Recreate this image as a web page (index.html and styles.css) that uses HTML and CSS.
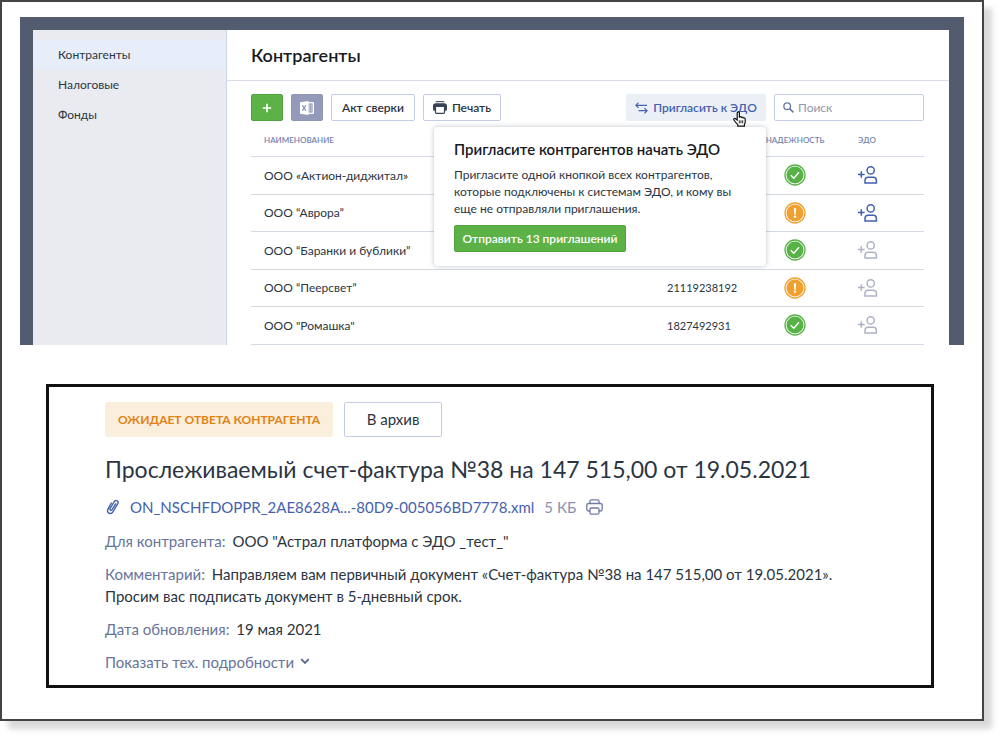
FILE: index.html
```html
<!DOCTYPE html>
<html lang="ru">
<head>
<meta charset="utf-8">
<meta name="viewport" content="width=device-width, initial-scale=1">
<title>Контрагенты</title>
<link rel="stylesheet" href="styles.css">
</head>
<body>
<svg class="sprite" aria-hidden="true">
  <symbol id="ok" viewBox="0 0 22 22">
    <circle cx="11" cy="11" r="10" fill="#fff" stroke="#58b248" stroke-width="1.3"/>
    <circle cx="11" cy="11" r="8.5" fill="#58b248"/>
    <path d="M6.8 11.2l3 3 5.2-6" fill="none" stroke="#fff" stroke-width="1.3"/>
  </symbol>
  <symbol id="warn" viewBox="0 0 22 22">
    <circle cx="11" cy="11" r="10" fill="#fff" stroke="#efa02f" stroke-width="1.3"/>
    <circle cx="11" cy="11" r="8.5" fill="#efa02f"/>
    <path d="M9.8 6.3h2.4l-.5 6.4h-1.4z" fill="#fff"/>
    <circle cx="11" cy="14.8" r="1.2" fill="#fff"/>
  </symbol>
  <symbol id="invite" viewBox="0 0 20 18">
    <g fill="none" stroke="currentColor" stroke-width="1.5">
      <circle cx="12.7" cy="4.4" r="3.6"/>
      <path d="M7 17v-2.600c0-1.900 1.300-3.200 3.200-3.200h5c1.900 0 3.200 1.300 3.200 3.200V17z"/>
      <path d="M0 8.500h6.600M3.300 5.200v6.600"/>
    </g>
  </symbol>
</svg>
<div class="sheet">
  <section class="app">
    <nav class="sidebar" aria-label="Разделы">
      <a class="sidebar-link is-active" href="#partners">Контрагенты</a>
      <a class="sidebar-link" href="#tax">Налоговые</a>
      <a class="sidebar-link" href="#funds">Фонды</a>
    </nav>
    <main class="main" id="partners">
      <header class="main-header"><h1 class="main-title">Контрагенты</h1></header>
      <div class="content">
        <div class="toolbar">
          <button class="btn btn-green btn-icon" type="button" aria-label="Добавить">
            <svg width="10" height="10" viewBox="0 0 10 10"><path d="M5 .8v8.400M.8 5h8.400" stroke="#fff" stroke-width="1.6"/></svg>
          </button>
          <button class="btn btn-excel btn-icon" type="button" aria-label="Excel">
            <svg width="16" height="14" viewBox="0 0 16 14">
              <path d="M9 1.500h5.500v11H9" fill="#c9cddd" stroke="#fff"/>
              <path d="M9.500 3.700h4M9.500 5.900h4M9.500 8.100h4M9.500 10.300h4M11.500 2v10" stroke="#949bb9" stroke-width=".7"/>
              <path d="M1 1.300L9.500 0v14L1 12.700z" fill="#fff"/>
              <path d="M3.300 4.300l3.600 5.400M6.900 4.300L3.300 9.700" stroke="#7e86a9" stroke-width="1.100"/>
            </svg>
          </button>
          <button class="btn" type="button">Акт сверки</button>
          <button class="btn btn-print" type="button">
            <svg width="14" height="13" viewBox="0 0 14 13">
              <path d="M2.800.7h8.400" stroke="#3a4459" stroke-width="1.100"/>
              <path d="M2.500 2.200h9c1.500 0 2.500 1 2.500 2.300v3.700c0 .9-.6 1.500-1.500 1.500H12V6H2v3.700h-.5C.6 9.700 0 9.100 0 8.200V4.500c0-1.300 1-2.300 2.500-2.300z" fill="#3a4459"/>
              <path d="M2.500 5.500h9v5.700c0 .7-.4 1.100-1.100 1.100H3.600c-.7 0-1.100-.4-1.100-1.100z" fill="#fff" stroke="#3a4459" stroke-width="1.200"/>
            </svg>
            Печать
          </button>
          <div class="invite">
            <button class="btn btn-invite" type="button" aria-expanded="true">
              <svg width="13" height="12" viewBox="0 0 13 12"><path d="M3.500.7L.9 3.300l2.600 2.600M.9 3.300H12M9.500 6.100l2.600 2.600-2.600 2.600M12.100 8.700H3.500" fill="none" stroke="currentColor" stroke-width="1.200"/></svg>
              Пригласить к ЭДО
            </button>
            <svg class="cursor" width="13" height="16" viewBox="0 0 13 16"><path d="M4.200 9V2c0-1.600 2.200-1.600 2.200 0v4c.8-.6 1.800-.4 2 .4.800-.5 1.700-.2 1.900.6 1-.4 1.900.1 1.900 1.200v3c0 1-.8 1.700-.8 2.600v1.300H4.800v-1.400C3.300 12.200 2.300 11 .9 9c-.7-1.100.6-2 1.600-1.300z" fill="#fff" stroke="#111" stroke-width="1.200"/><path d="M6.300 9.300v3M8 9.300v3M9.700 9.300v3" stroke="#111" stroke-width=".9"/></svg>
            <div class="popover">
              <h2 class="popover-title">Пригласите контрагентов начать ЭДО</h2>
              <p class="popover-text">Пригласите одной кнопкой всех контрагентов, которые подключены к системам ЭДО, и кому вы еще не отправляли приглашения.</p>
              <button class="btn btn-green btn-send" type="button">Отправить 13 приглашений</button>
            </div>
          </div>
          <label class="search">
            <svg width="11" height="11" viewBox="0 0 11 11"><circle cx="4.200" cy="4.200" r="3.300" fill="none" stroke="#6e7baa" stroke-width="1.400"/><path d="M6.600 6.600l3.800 3.800" stroke="#6e7baa" stroke-width="1.600"/></svg>
            <input class="search-input" type="search" placeholder="Поиск" aria-label="Поиск">
          </label>
        </div>
        <table class="table">
          <colgroup><col><col class="col-inn"><col class="col-trust"><col class="col-edo"></colgroup>
          <thead>
            <tr><th class="name">Наименование</th><th></th><th class="trust">Надежность</th><th class="edo">ЭДО</th></tr>
          </thead>
          <tbody>
            <tr><td class="name">ООО «Актион-диджитал»</td><td></td><td class="trust"><svg class="status"><use href="#ok"/></svg></td><td class="edo"><svg class="person is-on"><use href="#invite"/></svg></td></tr>
            <tr><td class="name">ООО “Аврора”</td><td></td><td class="trust"><svg class="status"><use href="#warn"/></svg></td><td class="edo"><svg class="person is-on"><use href="#invite"/></svg></td></tr>
            <tr><td class="name">ООО “Баранки и бублики”</td><td></td><td class="trust"><svg class="status"><use href="#ok"/></svg></td><td class="edo"><svg class="person"><use href="#invite"/></svg></td></tr>
            <tr><td class="name">ООО “Пеерсвет”</td><td class="inn">21119238192</td><td class="trust"><svg class="status"><use href="#warn"/></svg></td><td class="edo"><svg class="person"><use href="#invite"/></svg></td></tr>
            <tr><td class="name">ООО "Ромашка"</td><td class="inn">1827492931</td><td class="trust"><svg class="status"><use href="#ok"/></svg></td><td class="edo"><svg class="person"><use href="#invite"/></svg></td></tr>
          </tbody>
        </table>
      </div>
    </main>
  </section>
  <section class="document">
    <div class="doc-actions">
      <span class="badge">Ожидает ответа контрагента</span>
      <button class="btn-archive" type="button">В архив</button>
    </div>
    <h2 class="doc-title">Прослеживаемый счет-фактура №38 на 147 515,00 от 19.05.2021</h2>
    <div class="file">
      <svg width="15" height="17" viewBox="0 0 15 17"><path d="M10.600 5.800L7.100 11.600c-.9 1.400-2.800.3-2-1.100l4.100-6.900c1.500-2.400 5-.4 3.600 2.100l-4.900 8.200c-2 3.300-6.800.7-4.900-2.800L6.300 5" fill="none" stroke="#4561ae" stroke-width="1.400" stroke-linecap="round"/></svg>
      <a class="file-link" href="#file">ON_NSCHFDOPPR_2AE8628A...-80D9-005056BD7778.xml</a>
      <span class="file-size">5 КБ</span>
      <button class="file-print" type="button" aria-label="Печать">
        <svg width="17" height="16" viewBox="0 0 17 16" fill="none" stroke="#707ba3" stroke-width="1.300"><path d="M4 4.500V2.200C4 1.300 4.500.8 5.400.8h6.200c.9 0 1.400.5 1.400 1.400v2.300M4 12H2.600C1.400 12 .8 11.400.8 10.200V6.400c0-1.200.6-1.900 1.800-1.900h11.800c1.200 0 1.800.7 1.800 1.900v3.800c0 1.200-.6 1.800-1.800 1.800H13"/><rect x="4" y="9" width="9" height="6.200" rx="1.500"/></svg>
      </button>
    </div>
    <p class="field"><span class="label">Для контрагента:</span> ООО "Астрал платформа с ЭДО _тест_"</p>
    <p class="field"><span class="label">Комментарий:</span> Направляем вам первичный документ «Счет-фактура №38 на 147 515,00 от 19.05.2021».<br>Просим вас подписать документ в 5-дневный срок.</p>
    <p class="field"><span class="label">Дата обновления:</span> 19 мая 2021</p>
    <button class="details" type="button">Показать тех. подробности
      <svg width="10" height="7" viewBox="0 0 10 7"><path d="M1.200 1.200L5 5l3.800-3.800" fill="none" stroke="#5a668f" stroke-width="1.800"/></svg>
    </button>
  </section>
</div>
</body>
</html>
```
FILE: styles.css
```css
* { box-sizing: border-box; }
body {
  margin: 0;
  background: #fff;
  color: #2b3542;
  font-family: Lato, "Open Sans", sans-serif;
  font-size: 12px;
}
h1, h2, p { margin: 0; }
button, input { font: inherit; color: inherit; }
button { cursor: pointer; }
svg { flex: none; display: block; }
.sprite { position: absolute; width: 0; height: 0; }

.sheet {
  margin: 0 16px 16px 0;
  padding: 15px 18px 31px;
  border: 2px solid #444446;
  background: #fff;
  box-shadow: 8px 8px 6px #d8d8d8;
}

/* Partner list */
.app {
  display: flex;
  border: solid #525c6e;
  border-width: 13px 15px 0 13px;
}
.sidebar {
  flex: none;
  width: 194px;
  padding-top: 10px;
  border-right: 1px solid #ccd5e8;
  background: #e9ebf0;
}
.sidebar-link {
  display: block;
  padding-left: 25px;
  line-height: 30px;
  color: #2b3542;
  text-decoration: none;
}
.sidebar-link.is-active { background: #e8eef9; }
.main { flex: 1; min-width: 0; }
.main-header {
  padding: 0 24px;
  border-bottom: 1px solid #d9dde6;
}
.main-title {
  font-size: 18px;
  font-weight: 600;
  line-height: 50px;
  color: #16191f;
}
.content { padding: 13px 25px 0 24px; }
.toolbar { display: flex; gap: 8px; }
.btn {
  display: flex;
  align-items: center;
  justify-content: center;
  gap: 5px;
  height: 27px;
  padding: 0 10px;
  border: 1px solid #c5cce6;
  border-radius: 2px;
  background: #fff;
  font-weight: 600;
  white-space: nowrap;
}
.btn-icon { width: 32px; padding: 0; }
.btn-green { background: #5cb247; border-color: #4fa53b; color: #fff; }
.btn-excel { background: #949bb9; border-color: #8f97b7; }
.btn-print { padding: 0 9px; }
.invite { position: relative; margin-left: auto; }
.btn-invite {
  width: 140px;
  background: #eaf0f5;
  border-color: #eaf0f5;
  color: #4561ae;
}
.cursor { position: absolute; right: 20px; top: 17px; z-index: 2; }
.popover {
  position: absolute;
  right: 0;
  top: 33px;
  z-index: 1;
  width: 332px;
  padding: 11px 20px 14px;
  border-radius: 4px;
  background: #fff;
  box-shadow: 0 0 5px rgba(40, 50, 80, .3);
}
.popover-title {
  margin-bottom: 6px;
  font-size: 15px;
  font-weight: 600;
  line-height: 22px;
  color: #16191f;
  white-space: nowrap;
}
.popover-text { line-height: 17px; margin-bottom: 8px; }
.btn-send { width: 172px; }
.search {
  display: flex;
  align-items: center;
  gap: 4px;
  width: 150px;
  height: 27px;
  padding: 0 8px;
  border: 1px solid #c5cce6;
  border-radius: 2px;
}
.search-input {
  flex: 1;
  min-width: 0;
  padding: 0;
  border: 0;
  outline: 0;
  background: none;
}
.search-input::placeholder { color: #8e95b0; opacity: 1; }

.table {
  width: 100%;
  border-collapse: collapse;
  table-layout: fixed;
}
.col-inn { width: 97px; }
.col-trust { width: 62px; }
.col-edo { width: 98px; }
.table th, .table td {
  padding: 0;
  border-bottom: 1px solid #d3dae6;
  text-align: left;
}
.table th {
  height: 35px;
  padding-top: 4px;
  font-size: 8px;
  font-weight: 600;
  color: #7682ad;
  text-transform: uppercase;
}
.table td { height: 37px; }
.table tr:nth-child(odd) td { height: 38px; }
.table .name { padding-left: 13px; }
.table .inn { font-size: 11px; }
.table .trust { text-align: center; }
.table .edo { padding-left: 32px; }
.status { width: 22px; height: 22px; margin: 0 auto; }
.person { width: 20px; height: 18px; color: #adb3c6; }
.person.is-on { color: #4060b0; }

/* Document card */
.document {
  margin: 39px 30px 0 26px;
  padding: 15px 56px 12px;
  border: 3px solid #111;
  font-size: 15px;
  line-height: 22px;
}
.doc-actions { display: flex; gap: 11px; }
.badge {
  padding: 0 13px;
  border-radius: 3px;
  background: #faeedc;
  color: #e08214;
  font-size: 12px;
  font-weight: 700;
  line-height: 35px;
  text-transform: uppercase;
}
.btn-archive {
  width: 98px;
  border: 1px solid #c5cce6;
  border-radius: 2px;
  background: #fff;
}
.doc-title {
  margin: 16px 0 11px;
  font-size: 23px;
  font-weight: 400;
  line-height: 32px;
}
.file { display: flex; align-items: center; gap: 10px; margin-bottom: 12px; }
.file-link { color: #4561ae; text-decoration: none; }
.file-size { color: #8a92b2; }
.file-print { padding: 0; border: 0; background: none; }
.field { margin-bottom: 11px; }
.label { margin-right: 3px; color: #68749a; }
.details {
  display: flex;
  align-items: center;
  gap: 6px;
  padding: 0;
  border: 0;
  background: none;
  color: #68749a;
  line-height: 22px;
}
```
